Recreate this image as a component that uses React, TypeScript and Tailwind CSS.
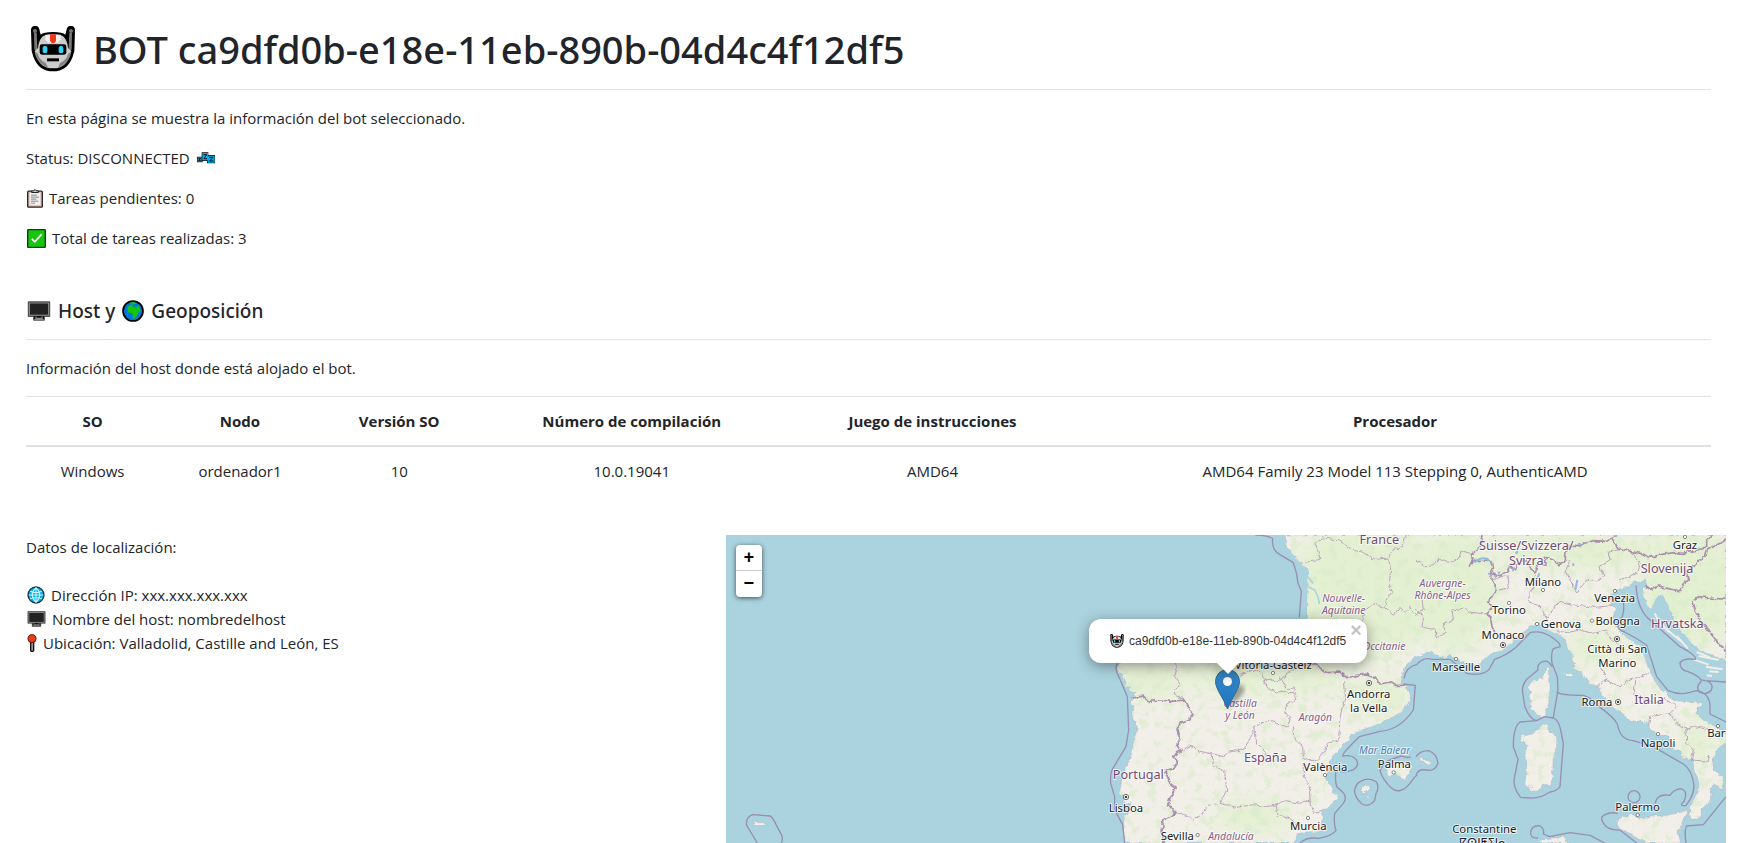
import React from "react";

type IconProps = { className?: string };

const BOT_ID = "ca9dfd0b-e18e-11eb-890b-04d4c4f12df5";

function BotIcon({ className }: IconProps) {
  return (
    <svg viewBox="0 0 138 138" className={className} aria-hidden="true">
      <path d="M3 14 A12 12 0 0 1 28 10 L32 26 Q40 18 69 18 Q98 18 106 26 L110 10 A12 12 0 0 1 135 14 L133 75 L128 92 Q112 136 69 136 Q26 136 10 92 L5 75Z" fill="#000" />
      <path d="M12 20 L20 20 L23 84 L13 70Z M126 20 L118 20 L115 84 L125 70Z" fill="#767676" />
      <circle cx="15" cy="15" r="6" fill="#767676" />
      <circle cx="123" cy="15" r="6" fill="#767676" />
      <path d="M34 36 Q40 25 69 25 Q98 25 104 36 Q112 46 114 66 L124 76 L118 92 Q106 127 69 127 Q32 127 20 92 L14 76 L24 66 Q26 46 34 36Z" fill="#cccccc" />
      <path d="M14 76 L24 84 Q28 102 48 112 L54 125 Q28 116 17 90Z M124 76 L114 84 Q110 102 90 112 L84 125 Q110 116 121 90Z" fill="#858585" />
      <path d="M46 26h46v14l-8 10H54l-8-10Z" fill="#f2f2f2" />
      <path d="M60 25h18v20l-6 7h-6l-6-7Z" fill="#f03a17" />
      <rect x="29" y="55" width="80" height="31" rx="7" fill="#000" />
      <rect x="38" y="60" width="14" height="22" rx="6" fill="#31d2f7" />
      <rect x="86" y="60" width="14" height="22" rx="6" fill="#31d2f7" />
      <rect x="51" y="97" width="36" height="9" fill="#000" />
    </svg>
  );
}

function SleepIcon({ className }: IconProps) {
  return (
    <svg viewBox="0 0 54 36" className={className} aria-hidden="true">
      <path d="M0 14H14V1H34V9H54V34H30V27H17V31H0Z" fill="#111" />
      <path d="M2 16h12v13H2Z M16 3h17v22H16Z M32 11h21v21H32Z" fill="#00a9e8" />
      <path d="M4 19h7l-6 7h7 M20 8h9l-8 12h9 M36 16h12l-10 11h11" fill="none" stroke="#111" strokeWidth="3" />
    </svg>
  );
}

function ClipboardIcon({ className }: IconProps) {
  return (
    <svg viewBox="0 0 48 56" className={className} aria-hidden="true">
      <rect x="2" y="6" width="44" height="48" rx="3" fill="#d8bfae" stroke="#2b2421" strokeWidth="4" />
      <rect x="8" y="11" width="32" height="37" fill="#f0f0f0" />
      <path d="M14 10V5h6q4-8 8 0h6v5Z" fill="#ccc" stroke="#222" strokeWidth="3" />
      <path d="M12 18h18M12 24h24M12 30h16M12 36h22M12 42h12" stroke="#8a8a8a" strokeWidth="3" />
    </svg>
  );
}

function CheckIcon({ className }: IconProps) {
  return (
    <svg viewBox="0 0 56 56" className={className} aria-hidden="true">
      <rect x="2" y="2" width="52" height="52" rx="2" fill="#16c60c" stroke="#123d10" strokeWidth="4" />
      <path d="M14 29l9 9 20-22" fill="none" stroke="#fff" strokeWidth="5" />
    </svg>
  );
}

function MonitorIcon({ className }: IconProps) {
  return (
    <svg viewBox="0 0 60 52" className={className} aria-hidden="true">
      <path d="M2 2h56v38H44v10H16V40H2Z" fill="#111" stroke="#444" strokeWidth="2" />
      <rect x="5" y="5" width="50" height="32" fill="#222" stroke="#8c8c8c" strokeWidth="3" />
      <path d="M22 40v5h16v-5 M18 48h24" fill="none" stroke="#8c8c8c" strokeWidth="3" />
    </svg>
  );
}

function EarthIcon({ className }: IconProps) {
  return (
    <svg viewBox="0 0 64 64" className={className} aria-hidden="true">
      <circle cx="32" cy="32" r="29" fill="#0078d7" stroke="#000" strokeWidth="5" />
      <path d="M15 24 Q20 14 28 14 L34 18 L48 16 L52 24 L54 32 L48 34 Q46 44 40 50 L35 55 L31 50 L30 38 L18 36Z M22 8l14-2 6 4-12 4Z" fill="#16c60c" />
      <path d="M30 17l8 4 6-2" fill="none" stroke="#0078d7" strokeWidth="3" />
    </svg>
  );
}

function GlobeIcon({ className }: IconProps) {
  return (
    <svg viewBox="0 0 52 52" className={className} aria-hidden="true">
      <circle cx="26" cy="26" r="23" fill="#00b2f0" stroke="#173543" strokeWidth="4" />
      <path d="M26 5v42M5 26h42M9 15q17 7 34 0M9 37q17-7 34 0M26 5q-22 21 0 42q22-21 0-42" fill="none" stroke="#cdf2ff" strokeWidth="3" />
    </svg>
  );
}

function PinIcon({ className }: IconProps) {
  return (
    <svg viewBox="0 0 28 54" className={className} aria-hidden="true">
      <path d="M10 22h9v28q-4 5-9 0Z" fill="#999" stroke="#111" strokeWidth="4" />
      <circle cx="14" cy="14" r="12" fill="#f03a17" stroke="#5a160b" strokeWidth="3" />
    </svg>
  );
}

const hostColumns = [
  { title: "SO", value: "Windows", width: "w-[7.9%]" },
  { title: "Nodo", value: "ordenador1", width: "w-[9.6%]" },
  { title: "Versión SO", value: "10", width: "w-[9.3%]" },
  { title: "Número de compilación", value: "10.0.19041", width: "w-[18.3%]" },
  { title: "Juego de instrucciones", value: "AMD64", width: "w-[17.4%]" },
  { title: "Procesador", value: "AMD64 Family 23 Model 113 Stepping 0, AuthenticAMD", width: "w-[37.5%]" },
];

type Label = { x: number; y: number; text: string };

const countries: Label[] = [
  { x: 898, y: 41, text: "France" },
  { x: 556, y: 695, text: "España" },
  { x: 175, y: 748, text: "Portugal" },
  { x: 1339, y: 59, text: "Suisse/Svizzera/" },
  { x: 1339, y: 105, text: "Svizra" },
  { x: 1761, y: 129, text: "Slovenija" },
  { x: 1792, y: 294, text: "Hrvatska" },
  { x: 1707, y: 521, text: "Italia" },
];

const regions: Label[] = [
  { x: 791, y: 215, text: "Nouvelle-" },
  { x: 791, y: 251, text: "Aquitaine" },
  { x: 912, y: 360, text: "Occitanie" },
  { x: 480, y: 530, text: "Castilla" },
  { x: 480, y: 566, text: "y León" },
  { x: 706, y: 573, text: "Aragón" },
  { x: 453, y: 929, text: "Andalucía" },
  { x: 1088, y: 172, text: "Auvergne-" },
  { x: 1088, y: 208, text: "Rhône-Alpes" },
];

const cities: Label[] = [
  { x: 580, y: 416, text: "Vitoria-Gasteiz" },
  { x: 866, y: 504, text: "Andorra" },
  { x: 866, y: 545, text: "la Vella" },
  { x: 736, y: 723, text: "València" },
  { x: 943, y: 714, text: "Palma" },
  { x: 138, y: 846, text: "Lisboa" },
  { x: 292, y: 929, text: "Sevilla" },
  { x: 685, y: 899, text: "Murcia" },
  { x: 1389, y: 168, text: "Milano" },
  { x: 1287, y: 253, text: "Torino" },
  { x: 1443, y: 294, text: "Genova" },
  { x: 1269, y: 328, text: "Monaco" },
  { x: 1128, y: 422, text: "Marseille" },
  { x: 1604, y: 217, text: "Venezia" },
  { x: 1613, y: 286, text: "Bologna" },
  { x: 1612, y: 370, text: "Città di San" },
  { x: 1612, y: 411, text: "Marino" },
  { x: 1815, y: 58, text: "Graz" },
  { x: 1551, y: 528, text: "Roma" },
  { x: 1734, y: 651, text: "Napoli" },
  { x: 1909, y: 622, text: "Bar" },
  { x: 1673, y: 842, text: "Palermo" },
  { x: 1213, y: 909, text: "Constantine" },
  { x: 1207, y: 949, text: "ⵇⵙⵏⵟⵉⵏⴰ" },
];

const towns = [
  [579, 429], [735, 735], [941, 727], [353, 915], [684, 864], [1389, 180], [1287, 219],
  [1371, 282], [1128, 387], [1605, 183], [1536, 272], [1815, 21], [1734, 612], [1914, 588], [1673, 855],
];

const capitals = [[867, 459], [138, 801], [1269, 345], [1611, 327], [1614, 516]];

const LAND =
  "M615 15L622 38 618 50 640 72 655 92 668 96 664 108 678 112 690 130 678 146 686 160 682 200 681 262 672 300 650 335 600 370 540 385 480 375 300 365 180 360 135 378 128 396 112 412 112 426 132 436 128 448 140 452 136 468 154 470 150 482 166 490 160 500 152 518 162 530 158 560 172 592 162 630 154 680 140 706 128 738 118 790 132 800 130 816 152 822 145 850 132 868 128 900 134 939H636L652 915 690 905 736 905 724 880 730 842 756 822 776 800 758 786 760 772 740 755 738 730 746 712 752 690 770 665 798 640 812 632 812 614 850 598 900 582 960 548 984 520 990 502 978 466 962 460 966 440 972 412 1000 384 1032 372 1050 364 1075 378 1098 384 1110 376 1135 390 1160 400 1178 406 1205 400 1212 388 1245 368 1275 356 1306 325 1348 292 1375 280 1405 302 1432 312 1450 320 1464 358 1476 372 1484 402 1478 416 1500 422 1520 448 1530 462 1552 468 1564 488 1576 512 1604 536 1640 560 1650 576 1680 572 1706 582 1712 602 1734 612 1752 616 1770 622 1782 656 1804 664 1808 682 1838 688 1844 728 1858 750 1854 786 1846 800 1828 832 1832 866 1858 868 1868 834 1892 812 1896 794 1890 776 1900 764 1928 780 1930 742 1900 722 1898 690 1908 664 1926 644 1938 640V612L1900 586 1868 570 1846 548 1852 532 1866 528 1862 514 1838 518 1792 512 1764 500 1730 462 1704 412 1690 370 1680 352 1650 328 1620 306 1606 280 1596 262 1610 236 1596 224 1590 198 1612 180 1650 168 1662 152 1684 158 1696 150 1702 166 1690 176 1690 200 1712 240 1722 222 1736 192 1752 200 1766 230 1788 282 1836 338 1870 366 1938 394V15Z";

const ISLANDS =
  "M1400 414L1408 416 1410 470 1406 520 1392 560 1376 556 1364 546 1350 528 1356 512 1346 498 1352 486 1342 472 1362 452 1386 444Z M1390 578L1404 586 1408 606 1430 620 1430 650 1420 670 1418 730 1412 768 1390 762 1372 784 1352 784 1334 766 1340 722 1334 670 1342 650 1332 636 1320 636 1324 616 1346 616 1370 600Z M1612 874L1622 858 1642 862 1652 852 1690 866 1740 858 1780 852 1826 842 1808 874 1794 908 1802 939H1700L1640 905 1612 890Z M916 716L940 702 956 696 964 704 984 704 996 714 976 748 956 738 946 728 930 738Z M842 782L850 770 872 766 866 780 850 792Z M856 798L870 802 864 806Z M1020 684L1044 688 1054 698 1048 704 1032 694 1020 692Z M1376 934L1392 926 1420 924 1450 920 1458 932 1470 939H1376Z M1452 432l18-2 8 8-16 4Z M-984 872l10 6 30 0 6 4-12 6-24-2Z M1346 766l8-4 4 10-8 2Z";

const COAST_DALMATIA =
  "M1724 250l20 40 M1736 272l30 34 M1762 300l44 36 M1790 318l34 38 M1850 366l40 16 M1856 378l60 12 M1840 388l46 16 M1878 410l50 8 M1888 424l28 2 M1880 436l16 2";

const BORDERS =
  "M155 506L166 502 190 498 206 514 240 510 276 514 312 510 320 524 328 540 340 552 330 566 300 580 292 606 300 626 292 648 302 662 280 680 292 700 284 716 254 722 262 742 270 760 286 772 274 796 262 822 286 852 252 868 246 900 252 939 M715 410L740 428 780 426 802 444 832 436 860 432 882 440 900 462 930 456 946 466 980 466 M715 410L690 392 640 350 M1246 310L1236 290 1232 262 1218 252 1238 230 1220 214 1236 200 1250 178 1238 150 1230 130 1238 112 1230 90 1186 92 1168 108 1178 90 1174 74 1200 52 1206 15 M1230 130L1260 138 1282 122 1290 108 1306 120 1316 98 1330 86 1350 110 1366 128 1372 104 1398 102 1396 82 1420 90 1434 104 1456 92 1458 62 1470 48 1494 50 1516 40 1540 32 1580 34 1600 20 1608 15 M1594 22L1614 54 1652 64 1690 72 1706 82 1744 74 1782 68 1810 70 1852 60 1880 50 1880 28 1898 15 M1696 166L1716 180 1736 168 1774 178 1800 182 1812 160 1826 146 1820 122 1846 104 1876 78 1882 60 1938 30 M1938 208L1890 204 1856 200 1838 210 1848 248 1864 274 1888 306 1938 366";

const PROVINCES =
  "M283 396L292 410 284 440 300 462 282 490 312 510 M302 662L330 648 360 664 400 672 430 680 446 666 490 660 512 622 524 590 546 578 580 572 604 590 622 590 630 566 614 548 620 522 648 508 640 490 616 484 590 486 560 474 552 450 572 448 590 456 604 446 M604 446L620 476 640 474 648 500 M480 436L520 420 544 432 560 452 M604 446L640 418 672 402 700 404 M640 590L646 630 668 650 670 684 690 692 712 690 730 672 742 640 776 630 780 560 796 500 794 454 M524 590L530 640 550 656 566 696 M396 672L400 706 434 724 440 780 420 820 380 826 376 844 342 868 310 850 286 852 M420 820L470 832 520 824 560 830 588 824 616 812 660 820 690 810 688 770 670 742 670 700 M588 824L594 856 640 870 650 900 M692 810L700 850 730 844 M704 40L730 24 780 30 810 56 856 70 886 88 926 84 M704 40L718 66 718 92 678 96 M926 84L932 120 928 160 936 186 920 210 912 232 880 222 856 240 840 300 M926 84L936 60 970 48 976 15 M912 232L940 256 960 232 972 250 990 232 1006 256 1030 240 1026 200 1008 190 M1008 90L1034 108 1060 104 1076 84 1110 98 1134 88 1144 62 1170 70 1186 92 M1008 236L1030 264 1026 290 1066 300 1068 324 1096 310 1090 280 1120 268 1116 240 1156 234 1168 246 1216 252 M1238 146L1284 136 1286 160 1280 174 1260 180 M1372 130L1350 160 1362 170 1346 190 1350 220 1380 230 1400 262 1440 214 1490 226 1548 232 1600 226 M1400 262L1396 286 M1470 150L1458 120 1470 90 M1470 150L1490 186 1520 150 1550 156 1572 140 1560 110 1590 90 1584 64 1620 56 M1652 64L1680 100 1672 130 1620 150 M1430 302L1460 308 1500 300 1540 310 1580 300 M1580 300L1594 330 1626 350 M1560 410L1580 450 1552 470 M1580 450L1620 470 1650 450 1706 430 M1664 450L1660 490 1690 510 1740 520 1752 506 1790 530 1770 550 1710 560 1706 584 M1770 550L1790 580 1824 596 1850 590 1888 600 M1818 596L1820 640 1840 660 1834 690 1886 694 1886 676";

const MARITIME =
  "M526 15Q566 16 578 26Q574 60 600 74L640 98Q652 130 654 160L664 184 658 262 M112 400Q102 414 120 448L142 500 146 600 138 650 98 716Q90 730 92 760L104 800 104 840 128 884 134 939 M660 939Q680 920 716 925Q752 920 768 902Q760 880 764 850L790 820Q802 804 790 788L770 770Q764 750 768 722Q800 730 822 718Q840 704 828 688Q816 674 788 678Q786 670 838 620L900 604Q960 600 1000 540L1006 466 970 462 M972 446Q978 410 1010 404Q1030 380 1056 388L1110 388 1160 430Q1200 440 1226 420L1244 388Q1280 376 1308 352L1350 308Q1380 300 1410 318Q1444 340 1440 350L1420 356Q1412 370 1416 400L1432 440 1434 480Q1420 560 1420 566 M1416 410Q1406 390 1390 394Q1370 400 1374 420L1340 448Q1324 470 1328 486L1334 528Q1350 570 1370 572L1394 560 1420 564Q1436 570 1442 600L1450 640 1440 770Q1430 784 1410 786Q1380 806 1350 804L1322 802Q1296 770 1304 740L1314 688 1300 650Q1300 590 1320 576L1370 572 M1430 486Q1440 496 1510 496Q1530 500 1560 532Q1600 560 1612 582Q1620 630 1660 632L1724 652 1810 702Q1838 720 1842 770Q1840 800 1818 826Q1794 830 1812 814Q1826 780 1800 776Q1780 780 1770 796Q1730 790 1726 820 M1630 214Q1636 260 1614 276Q1610 300 1634 306Q1680 330 1700 346L1730 440 1764 482Q1800 496 1826 488L1850 482Q1890 490 1890 530L1890 552 1938 576 M1668 166Q1672 240 1710 270L1800 350Q1850 376 1846 388Q1810 384 1800 398Q1800 420 1822 424Q1850 434 1864 450L1876 452 1938 456 M1864 454Q1846 470 1858 486Q1878 498 1894 480Q1902 460 1878 452 M1938 800L1870 884 1820 888Q1812 900 1818 939 M1614 850Q1586 844 1566 860Q1562 876 1580 890Q1590 900 1620 900L1670 939 M842 754Q866 740 890 756Q898 776 888 790L884 812Q866 832 846 822Q822 800 824 780Q828 760 842 754 M992 680Q984 686 964 678L946 684Q910 694 900 722Q908 750 934 774Q960 796 990 760Q1004 740 1012 734 M1008 680Q1020 662 1046 662Q1070 670 1074 700Q1064 726 1040 720Q1016 716 1008 734 M1374 924Q1350 926 1352 904Q1360 884 1380 888Q1394 896 1390 912L1408 920 1470 908 1530 916 1574 939 M-968 939L-1000 886Q-1004 862 -982 854L-930 858Q-924 860 -918 872L-896 914Q-890 926 -896 939 M1644 800a18 18 0 1 0 36 0a18 18 0 1 0 -36 0";

function MapTiles() {
  return (
    <svg
      viewBox="-1062 15 3000 924"
      preserveAspectRatio="xMinYMin slice"
      className="absolute inset-0 h-full w-full"
      role="img"
      aria-label="Mapa"
    >
      <defs>
        <clipPath id="land">
          <path d={LAND} />
          <path d={ISLANDS} />
        </clipPath>
        <filter id="soft" x="-50%" y="-50%" width="200%" height="200%">
          <feGaussianBlur stdDeviation="28" />
        </filter>
        <filter id="woods" x="0" y="0" width="100%" height="100%">
          <feTurbulence type="fractalNoise" baseFrequency="0.035" numOctaves="5" seed="8" />
          <feColorMatrix values="0 0 0 0 0.7  0 0 0 0 0.84  0 0 0 0 0.6  6 0 0 0 -3.1" />
        </filter>
        <filter id="roughen" x="0" y="0" width="100%" height="100%">
          <feTurbulence type="fractalNoise" baseFrequency="0.06" numOctaves="3" seed="3" />
          <feDisplacementMap in="SourceGraphic" scale="14" xChannelSelector="R" yChannelSelector="G" />
        </filter>
      </defs>
      <rect x="-1062" y="15" width="3000" height="924" fill="#aad3df" />
      <g filter="url(#roughen)">
        <path d={LAND} fill="#f2efe9" stroke="#a99bb5" strokeWidth="1" />
        <path d={ISLANDS} fill="#f2efe9" stroke="#a99bb5" strokeWidth="1" />
        <g clipPath="url(#land)">
          <g filter="url(#soft)" fill="#e4f0d2">
            <ellipse cx="850" cy="180" rx="230" ry="210" />
            <ellipse cx="1120" cy="180" rx="130" ry="190" />
            <ellipse cx="1480" cy="60" rx="240" ry="60" />
            <ellipse cx="1830" cy="170" rx="150" ry="190" />
            <ellipse cx="210" cy="450" rx="110" ry="60" />
            <ellipse cx="560" cy="440" rx="260" ry="50" />
            <ellipse cx="900" cy="500" rx="90" ry="60" />
            <ellipse cx="520" cy="860" rx="120" ry="50" />
            <ellipse cx="1550" cy="350" rx="90" ry="50" />
            <ellipse cx="1850" cy="640" rx="50" ry="70" />
          </g>
          <rect x="0" y="15" width="1938" height="924" filter="url(#woods)" opacity="0.65" />
        </g>
        <path d={PROVINCES} fill="none" stroke="#bda4bd" strokeWidth="3" strokeLinejoin="round" />
        <path d={BORDERS} fill="none" stroke="#a98fac" strokeWidth="5" strokeLinejoin="round" />
      </g>
      <path d={COAST_DALMATIA} stroke="#f2efe9" strokeWidth="6" fill="none" />
      <path d="M684 170L704 180 714 200 718 222 M682 140L700 160 M658 104L684 118" stroke="#aad3df" strokeWidth="5" fill="none" />
      <path
        d="M1184 98Q1200 80 1222 86L1224 94 M1378 130l-8 20 M1492 150l-6 30 M1232 138l4-6 M1254 130l6-4 M1298 124l4-10 M1306 70l8-6 M1480 108v-8 M1576 448v8 M1608 20v-5 M1494 42h8"
        stroke="#8ebbe6"
        strokeWidth="6"
        fill="none"
      />
      <path d={MARITIME} fill="none" stroke="#988fb2" strokeWidth="4" strokeLinejoin="round" />
      {towns.map(([x, y]) => (
        <circle key={`${x}-${y}`} cx={x} cy={y} r="5" fill="#fff" stroke="#555" strokeWidth="2" />
      ))}
      {capitals.map(([x, y]) => (
        <g key={`${x}-${y}`}>
          <circle cx={x} cy={y} r="8" fill="#fff" stroke="#333" strokeWidth="2" />
          <circle cx={x} cy={y} r="4" fill="#444" />
        </g>
      ))}
      <g
        textAnchor="middle"
        stroke="#ffffff"
        strokeOpacity="0.7"
        strokeWidth="6"
        strokeLinejoin="round"
        className="font-['Noto_Sans','DejaVu_Sans',sans-serif] [paint-order:stroke]"
      >
        <g fill="#734a73" className="text-[38px]">
          {countries.map((l) => (
            <text key={l.text} x={l.x} y={l.y}>{l.text}</text>
          ))}
        </g>
        <g fill="#8a5f8a" className="text-[31px] italic">
          {regions.map((l) => (
            <text key={l.text} x={l.x} y={l.y}>{l.text}</text>
          ))}
        </g>
        <g fill="#222222" className="text-[34px]">
          {cities.map((l) => (
            <text key={l.text} x={l.x} y={l.y}>{l.text}</text>
          ))}
        </g>
        <text x="914" y="671" fill="#4d80b3" className="text-[31px] italic">Mar Balear</text>
      </g>
    </svg>
  );
}

function Marker() {
  return (
    <>
      <svg viewBox="0 0 41 41" className="absolute left-[489px] top-[134px] size-[41px]" aria-hidden="true">
        <defs>
          <filter id="markerShadow">
            <feGaussianBlur stdDeviation="2" />
          </filter>
        </defs>
        <path d="M13 40L19 20Q24 14 28 17Q31 21 26 27Z" fill="#000" opacity="0.35" filter="url(#markerShadow)" />
      </svg>
      <svg viewBox="0 0 25 41" className="absolute left-[489px] top-[134px] h-[41px] w-[25px]" aria-hidden="true">
        <defs>
          <linearGradient id="markerFill" x1="0" y1="0" x2="0" y2="1">
            <stop offset="0" stopColor="#3a8ac8" />
            <stop offset="1" stopColor="#1c74c0" />
          </linearGradient>
        </defs>
        <path
          d="M12.5.5A12 12 0 0 0 .5 12.5C.5 20 8.5 29 12.5 40C16.500 29 24.500 20 24.500 12.500A12 12 0 0 0 12.500.5Z"
          fill="url(#markerFill)"
          stroke="#2e6c97"
        />
        <circle cx="12.500" cy="12.500" r="4.500" fill="#fff" />
      </svg>
    </>
  );
}

function LocationMap() {
  return (
    <div className="relative min-h-[308px] w-[1000px] overflow-hidden bg-[#aad3df] font-['Liberation_Sans',sans-serif]">
      <MapTiles />
      <Marker />
      <div className="absolute left-[10px] top-[10px] flex w-[26px] flex-col overflow-hidden rounded bg-white text-black shadow-[0_1px_5px_rgba(0,0,0,0.65)]">
        <button type="button" aria-label="Zoom in" className="h-[26px] border-b border-[#ccc] font-['Liberation_Mono',monospace] text-[18px] leading-[26px] font-bold">
          +
        </button>
        <button type="button" aria-label="Zoom out" className="h-[26px] font-['Liberation_Mono',monospace] text-[18px] leading-[26px] font-bold">
          −
        </button>
      </div>
      <div className="absolute left-[363px] top-[84px] w-[278px] drop-shadow-[0_3px_7px_rgba(0,0,0,0.4)]">
        <div className="flex h-[44px] items-center gap-[5px] rounded-xl bg-white pl-[21px] text-[12px] whitespace-nowrap text-[#333]">
          <BotIcon className="size-[14px]" />
          <span>{BOT_ID}</span>
        </div>
        <svg viewBox="0 0 24 11" className="mx-auto h-[11px] w-[24px]" aria-hidden="true">
          <path d="M1 0h22L12 11Z" fill="#fff" />
        </svg>
        <button type="button" aria-label="Close popup" className="absolute right-0 top-0 size-[22px] text-[20px] leading-[22px] font-bold text-[#c3c3c3]">
          ×
        </button>
      </div>
    </div>
  );
}

export default function App() {
  return (
    <main className="flex min-h-screen flex-col bg-white pt-[25px] pr-[30px] pl-[26px] font-['Open_Sans','Noto_Sans',sans-serif] text-[15px] leading-6 text-[#212529]">
      <div className="pr-[15px]">
        <h1 className="flex items-center font-['Noto_Sans',sans-serif] text-[38px] leading-[48px] font-medium">
          <BotIcon className="mr-[17px] ml-[4px] size-[46px]" />
          BOT {BOT_ID}
        </h1>
        <hr className="my-4 border-[#e5e5e5]" />
        <div className="flex flex-col gap-4">
          <p>En esta página se muestra la información del bot seleccionado.</p>
          <p className="flex items-center gap-[7px]">
            Status: DISCONNECTED <SleepIcon className="h-[12px] w-[18px]" />
          </p>
          <p className="flex items-center gap-[6px]">
            <ClipboardIcon className="ml-px h-[19px] w-[16px]" /> Tareas pendientes: 0
          </p>
          <p className="flex items-center gap-[6px]">
            <CheckIcon className="ml-px size-[19px]" /> Total de tareas realizadas: 3
          </p>
        </div>

        <h2 className="mt-[49px] flex items-center gap-[7px] font-['Noto_Sans',sans-serif] text-[19px] leading-6 font-medium">
          <MonitorIcon className="ml-px h-[20px] w-[24px]" /> Host y <EarthIcon className="size-[22px]" /> Geoposición
        </h2>
        <hr className="my-4 border-[#e5e5e5]" />
        <p>Información del host donde está alojado el bot.</p>
        <table className="mt-4 w-full border-collapse text-center">
          <thead>
            <tr className="border-t border-b-2 border-t-[#dee2e6] border-b-[#dee2e6]">
              {hostColumns.map((c) => (
                <th key={c.title} scope="col" className={`${c.width} p-3 font-bold`}>{c.title}</th>
              ))}
            </tr>
          </thead>
          <tbody>
            <tr>
              {hostColumns.map((c) => (
                <td key={c.title} className="p-3">{c.value}</td>
              ))}
            </tr>
          </tbody>
        </table>
      </div>

      <div className="mt-10 flex flex-1 justify-between">
        <section>
          <p>Datos de localización:</p>
          <ul className="mt-6">
            <li className="flex items-center gap-[6px]">
              <GlobeIcon className="ml-px size-[18px]" /> Dirección IP: xxx.xxx.xxx.xxx
            </li>
            <li className="flex items-center gap-[6px]">
              <MonitorIcon className="ml-px h-[16px] w-[19px]" /> Nombre del host: nombredelhost
            </li>
            <li className="flex items-center gap-[6px]">
              <PinIcon className="ml-px h-[18px] w-[10px]" /> Ubicación: Valladolid, Castille and León, ES
            </li>
          </ul>
        </section>
        <LocationMap />
      </div>
    </main>
  );
}
